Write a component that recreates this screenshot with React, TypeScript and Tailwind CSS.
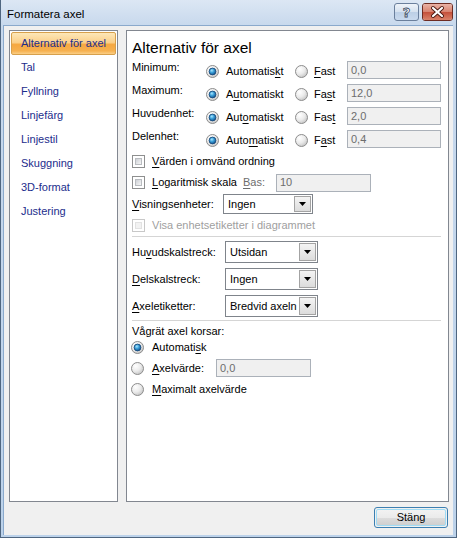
import React from "react";

// Office 2007 "Formatera axel" dialog on Vista Basic frame

const U = ({ c }: { c: string }) => <span className="underline underline-offset-[2px] decoration-[1px]">{c}</span>;

function Radio({ checked = false }: { checked?: boolean }) {
  return (
    <svg width="13" height="13" viewBox="0 0 13 13" className="shrink-0 block">
      <circle cx="6.5" cy="6.5" r="6" fill="url(#radioBg)" stroke="#8d8d8d" />
      {checked && <circle cx="6.5" cy="6.5" r="3.4" fill="url(#radioDot)" stroke="#1b4d7e" strokeWidth="0.9" />}
    </svg>
  );
}

function Check({ disabled = false }: { disabled?: boolean }) {
  return (
    <span
      className={
        "block w-[13px] h-[13px] shrink-0 border p-[2px] bg-white " +
        (disabled ? "border-[#c8c8c8]" : "border-[#8e8f8f]")
      }
    >
      <span
        className={
          "block w-full h-full border " +
          (disabled
            ? "border-[#e2e2e2] bg-[#f2f2f2]"
            : "border-[#b9bcc0] bg-[linear-gradient(135deg,#cdd0d5,#f6f6f6)]")
        }
      />
    </span>
  );
}

function Field({ value, w }: { value: string; w: string }) {
  return (
    <div className={"h-[18px] border border-[#abb1b9] bg-[#f0f0f0] text-[#6d6d6d] pl-[3px] flex items-center " + w}>
      {value}
    </div>
  );
}

function Select({ value, w, h }: { value: string; w: string; h: string }) {
  return (
    <div className={"flex border border-[#7f848b] bg-white " + w + " " + h}>
      <span className="flex-1 pl-[4px] flex items-center text-black whitespace-nowrap overflow-hidden">{value}</span>
      <span className="w-[17px] m-[1px] border border-[#a3a3a3] bg-[linear-gradient(to_bottom,#f4f4f4,#dcdcdc)] flex items-center justify-center">
        <svg width="7" height="4" viewBox="0 0 7 4">
          <path d="M0 0H7L3.5 4Z" fill="#000" />
        </svg>
      </span>
    </div>
  );
}

function AxisRow({ label, auto, fast, value }: { label: string; auto: React.ReactNode; fast: React.ReactNode; value: string }) {
  return (
    <div className="flex items-start h-[23px]">
      <span className="w-[74px] pt-[1px] leading-[14px]">{label}</span>
      <div className="w-[89px] flex items-center gap-[7px] mt-[6px]">
        <Radio checked />
        <span className="leading-[13px]">{auto}</span>
      </div>
      <div className="w-[52px] flex items-center gap-[6px] mt-[6px]">
        <Radio />
        <span className="leading-[13px]">{fast}</span>
      </div>
      <div className="mt-[2px]">
        <Field value={value} w="w-[94px]" />
      </div>
    </div>
  );
}

const navItems = ["Tal", "Fyllning", "Linjefärg", "Linjestil", "Skuggning", "3D-format", "Justering"];

export default function App() {
  return (
    <div className="w-[457px] h-[538px] flex flex-col bg-[linear-gradient(to_bottom,#dce7f4,#c8d9ed_25px,#bcd2ea)] border-l border-r border-b border-[#4f6680] font-['Liberation_Sans',Arial,sans-serif] text-[11px] text-black overflow-hidden">
      <svg width="0" height="0" className="absolute">
        <defs>
          <radialGradient id="radioBg" cx="35%" cy="30%" r="75%">
            <stop offset="0%" stopColor="#ffffff" />
            <stop offset="55%" stopColor="#ebebeb" />
            <stop offset="100%" stopColor="#c4c4c4" />
          </radialGradient>
          <radialGradient id="radioDot" cx="40%" cy="35%" r="70%">
            <stop offset="0%" stopColor="#a9e6ff" />
            <stop offset="45%" stopColor="#3a9fd8" />
            <stop offset="100%" stopColor="#0d4a86" />
          </radialGradient>
          <linearGradient id="closeBg" x1="0" y1="0" x2="0" y2="1">
            <stop offset="0%" stopColor="#eab3a6" />
            <stop offset="48%" stopColor="#d88471" />
            <stop offset="52%" stopColor="#c4503b" />
            <stop offset="100%" stopColor="#d9826a" />
          </linearGradient>
        </defs>
      </svg>

      {/* title bar */}
      <div className="h-[25px] flex items-start shrink-0">
        <span className="pl-[6px] pt-[7px] text-[11.5px] leading-[14px] text-black">Formatera axel</span>
        <div className="ml-auto flex gap-[3px] pt-[3px] pr-[3px]">
          <div className="w-[25px] h-[18px] rounded-[3px] border border-[#6a7f9c] bg-[linear-gradient(to_bottom,#eef3f9,#d5e1ef_50%,#bccfe6_52%,#c9daee)] flex items-center justify-center">
            <span className="font-['DejaVu_Sans',sans-serif] font-bold text-[13px] leading-[13px] text-white [-webkit-text-stroke:0.8px_#3b4b63]">?</span>
          </div>
          <div className="w-[31px] h-[18px] rounded-[3px] border border-[#6e2c22] overflow-hidden">
            <svg width="29" height="16" viewBox="0 0 29 16" className="block">
              <rect width="29" height="16" fill="url(#closeBg)" />
              <path d="M10 4L19 12M19 4L10 12" stroke="#4a1a12" strokeWidth="4" strokeLinecap="round" />
              <path d="M10 4L19 12M19 4L10 12" stroke="#ffffff" strokeWidth="2.2" strokeLinecap="round" />
            </svg>
          </div>
        </div>
      </div>

      {/* client area */}
      <div className="flex-1 ml-[2px] mr-[3px] mb-[2px] border-l border-t border-[#8aa9cc] bg-[#f0f0f0] flex flex-col pt-[4px] pl-[5px]">
        <div className="flex gap-[8px] h-[472px]">
          {/* nav */}
          <div className="w-[109px] h-full border border-[#828790] bg-white pt-[1px] px-[1px] text-[#1c2d8c]">
            <div className="h-[23px] flex items-center pl-[9px] border border-[#d7a04c] rounded-[2px] bg-[linear-gradient(to_bottom,#fde7b8,#fbd08a_45%,#f6a841_55%,#f6b150_85%,#fbcf86)]">
              Alternativ för axel
            </div>
            {navItems.map((n) => (
              <div key={n} className="h-[24px] flex items-center pl-[10px]">
                {n}
              </div>
            ))}
          </div>

          {/* options pane */}
          <div className="w-[323px] h-full border border-[#828790] bg-white pl-[5px] pr-[6px] flex flex-col">
            <div className="pt-[7px] h-[28px] text-[15.5px] leading-[20px]">Alternativ för axel</div>

            <AxisRow label="Minimum:" auto={<>Automatis<U c="k" />t</>} fast={<><U c="F" />ast</>} value="0,0" />
            <AxisRow label="Maximum:" auto={<>A<U c="u" />tomatiskt</>} fast={<>Fa<U c="s" />t</>} value="12,0" />
            <AxisRow label="Huvudenhet:" auto={<>Aut<U c="o" />matiskt</>} fast={<>Fas<U c="t" /></>} value="2,0" />
            <AxisRow label="Delenhet:" auto={<>Auto<U c="m" />atiskt</>} fast={<>F<U c="a" />st</>} value="0,4" />

            <div className="h-[21px] flex items-center gap-[7px]">
              <Check />
              <span><U c="V" />ärden i omvänd ordning</span>
            </div>
            <div className="h-[21px] flex items-center">
              <Check />
              <span className="ml-[7px] w-[91px]"><U c="L" />ogaritmisk skala</span>
              <span className="w-[33px] text-[#6d6d6d]"><U c="B" />as:</span>
              <Field value="10" w="w-[95px]" />
            </div>
            <div className="h-[22px] flex items-center">
              <span className="w-[91px]"><U c="V" />isningsenheter:</span>
              <Select value="Ingen" w="w-[90px]" h="h-[20px]" />
            </div>
            <div className="h-[21px] flex items-center gap-[7px] text-[#a0a0a0]">
              <Check disabled />
              <span>Visa enhetsetiketter i diagrammet</span>
            </div>

            <div className="h-px bg-[#d5d5d5] mr-[1px]" />

            <div className="flex flex-col gap-[5px] mt-[4px]">
              <div className="h-[22px] flex items-center">
                <span className="w-[93px]">Hu<U c="v" />udskalstreck:</span>
                <Select value="Utsidan" w="w-[93px]" h="h-[22px]" />
              </div>
              <div className="h-[22px] flex items-center">
                <span className="w-[93px]"><U c="D" />elskalstreck:</span>
                <Select value="Ingen" w="w-[93px]" h="h-[22px]" />
              </div>
              <div className="h-[22px] flex items-center">
                <span className="w-[93px]"><U c="A" />xeletiketter:</span>
                <Select value="Bredvid axeln" w="w-[93px]" h="h-[22px]" />
              </div>
            </div>

            <div className="h-px bg-[#d5d5d5] mt-[3px] mr-[1px]" />

            <div className="mt-[2px] h-[16px] leading-[16px]">Vågrät axel korsar:</div>
            <div className="h-[16px] flex items-center gap-[8px] -ml-[1px]">
              <Radio checked />
              <span>Automati<U c="s" />k</span>
            </div>
            <div className="mt-[2px] h-[22px] flex items-center -ml-[1px]">
              <Radio />
              <span className="ml-[8px] w-[64px]"><U c="A" />xelvärde:</span>
              <Field value="0,0" w="w-[95px]" />
            </div>
            <div className="h-[20px] flex items-center gap-[8px] -ml-[1px]">
              <Radio />
              <span><U c="M" />aximalt axelvärde</span>
            </div>
          </div>
        </div>

        <div className="flex justify-end pr-[5px] mt-[5px]">
          <div className="w-[74px] h-[21px] rounded-[3px] border border-[#3c7fb1] p-px">
            <div className="w-full h-full rounded-[2px] border border-[#9fdcf5] bg-[linear-gradient(to_bottom,#f2f2f2,#ebebeb_50%,#dddddd_51%,#cfcfcf)] flex items-center justify-center leading-none">
              Stäng
            </div>
          </div>
        </div>
      </div>
    </div>
  );
}
